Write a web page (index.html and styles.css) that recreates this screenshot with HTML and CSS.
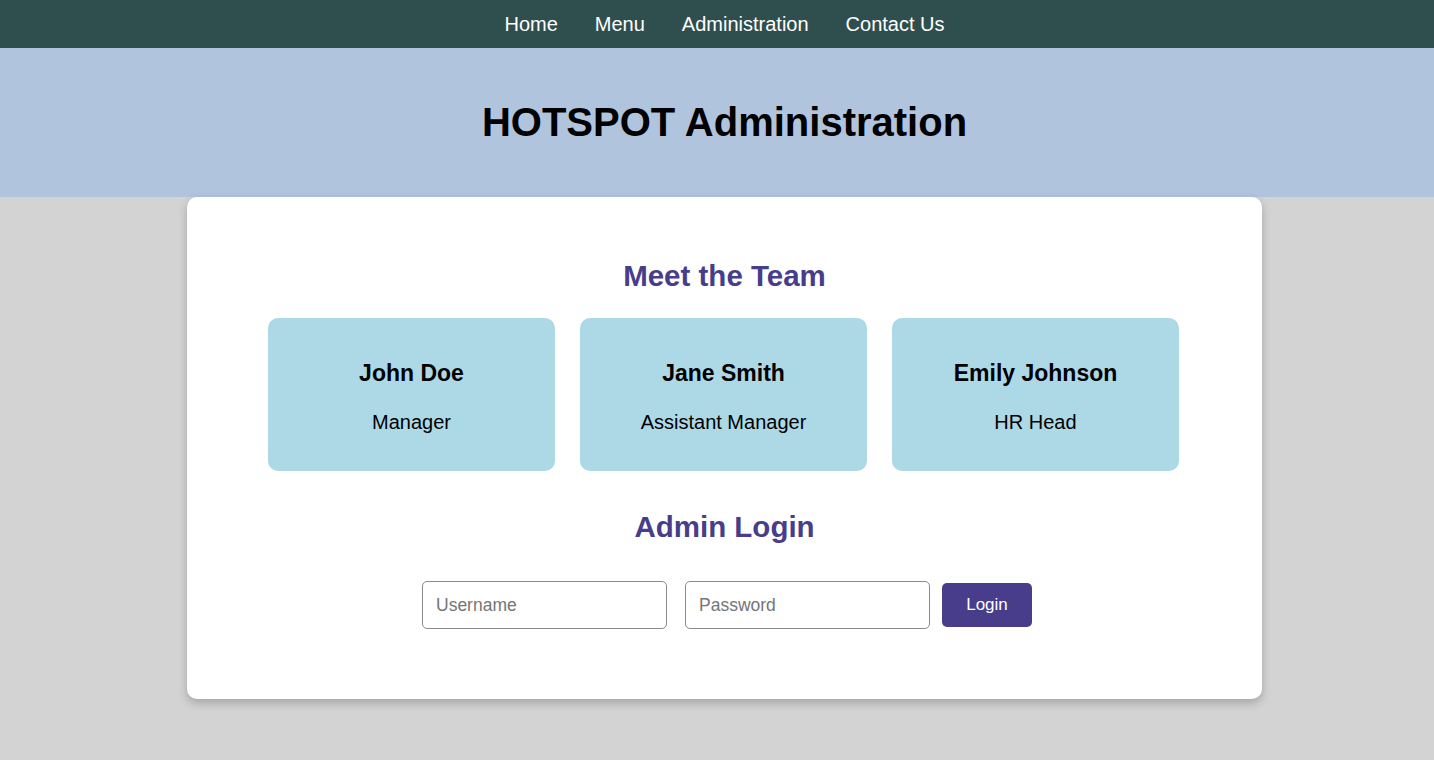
FILE: index.html
```html
<!DOCTYPE html>
<html lang="en">
<head>
<meta charset="utf-8">
<title>HOTSPOT Administration</title>
<link rel="stylesheet" href="styles.css">
</head>
<body>
<nav class="topnav">
  <a href="#" class="nav-link">Home</a>
  <a href="#" class="nav-link">Menu</a>
  <a href="#" class="nav-link">Administration</a>
  <a href="#" class="nav-link">Contact Us</a>
</nav>
<header class="hero">
  <h1 class="hero-title">HOTSPOT Administration</h1>
</header>
<main class="page">
  <section class="panel">
    <h2 class="section-title team-title">Meet the Team</h2>
    <div class="team">
      <div class="member">
        <h3 class="member-name">John Doe</h3>
        <p class="member-role">Manager</p>
      </div>
      <div class="member">
        <h3 class="member-name">Jane Smith</h3>
        <p class="member-role">Assistant Manager</p>
      </div>
      <div class="member">
        <h3 class="member-name">Emily Johnson</h3>
        <p class="member-role">HR Head</p>
      </div>
    </div>
    <h2 class="section-title login-title">Admin Login</h2>
    <form class="login-form">
      <input class="field field-user" type="text" placeholder="Username">
      <input class="field field-pass" type="password" placeholder="Password">
      <button class="login-btn" type="button">Login</button>
    </form>
  </section>
</main>
</body>
</html>
```

FILE: styles.css
```css
* {
  box-sizing: border-box;
}

html, body {
  margin: 0;
  padding: 0;
}

body {
  background: #d3d3d3;
  font-family: "Liberation Sans", Arial, sans-serif;
  min-height: 760px;
}

.topnav {
  height: 48px;
  background: #2f4f4f;
  display: flex;
  justify-content: center;
  align-items: center;
  gap: 37px;
  padding-left: 15px;
}

.nav-link {
  color: #ffffff;
  text-decoration: none;
  font-size: 20px;
}

.hero {
  height: 149px;
  background: #b0c4de;
  display: flex;
  justify-content: center;
  align-items: center;
  padding-left: 15px;
}

.hero-title {
  margin: 0;
  font-size: 40px;
  font-weight: bold;
  color: #000;
}

.page {
  padding-left: 15px;
}

.panel {
  width: 1075px;
  margin: 0 auto;
  background: #ffffff;
  border-radius: 10px;
  box-shadow: 0 4px 10px rgba(0, 0, 0, 0.22);
  padding: 40px 40px 70px;
}

.section-title {
  margin: 0;
  text-align: center;
  color: #483d8b;
  font-size: 29.5px;
  font-weight: bold;
}

.team-title {
  margin-top: 22px;
  margin-bottom: 25px;
}

.team {
  display: flex;
  justify-content: center;
  gap: 25px;
  margin-bottom: 39px;
  padding-right: 2px;
}

.member {
  width: 287px;
  height: 153px;
  background: #add8e6;
  border-radius: 10px;
  text-align: center;
  padding-top: 42px;
}

.member-name {
  margin: 0 0 24px;
  font-size: 23px;
  font-weight: bold;
  color: #000;
}

.member-role {
  margin: 0;
  font-size: 20px;
  color: #000;
}

.login-title {
  margin-bottom: 37px;
}

.login-form {
  display: flex;
  justify-content: center;
  align-items: center;
  padding-left: 5px;
}

.field {
  width: 245px;
  height: 48px;
  border: 1px solid #8a8a8a;
  border-radius: 5px;
  padding: 0 13px;
  font-family: "Liberation Sans", Arial, sans-serif;
  font-size: 17.5px;
  color: #000;
  background: #fff;
}

.field::placeholder {
  color: #757575;
}

.field-user {
  margin-right: 18px;
}

.field-pass {
  margin-right: 12px;
}

.login-btn {
  height: 44px;
  width: 90px;
  border: none;
  border-radius: 5px;
  background: #483d8b;
  color: #ffffff;
  font-family: "Liberation Sans", Arial, sans-serif;
  font-size: 17px;
  padding: 0;
}
```
